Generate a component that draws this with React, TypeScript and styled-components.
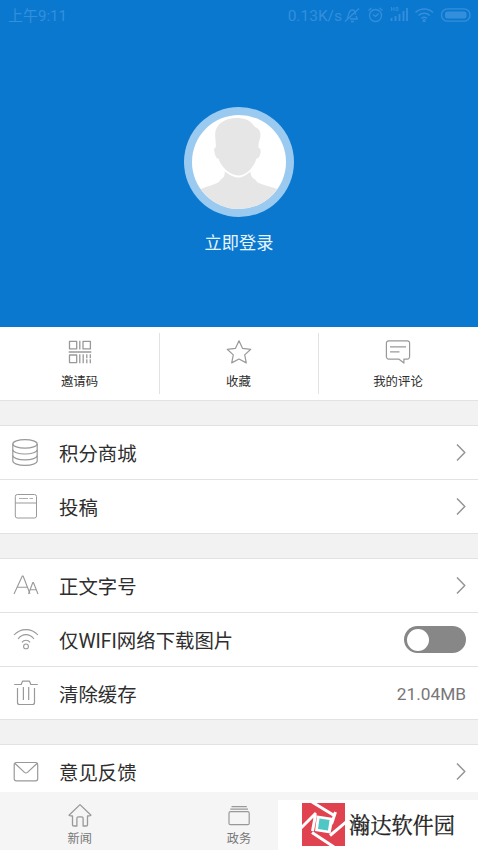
import React, {FC, ReactNode} from "react";
import styled, {createGlobalStyle} from "styled-components";

const colors = {
    blue: "#0b78d0",
    status: "#338fdb",
    white: "#ffffff",
    page: "#f2f2f2",
    line: "#e2e2e2",
    text: "#2e2e2e",
    gray: "#777777",
    icon: "#999999",
    toggle: "#878787",
    tabBar: "#f5f5f5",
    red: "#e0424f",
    teal: "#4fc7c4"
};

const GlobalStyle = createGlobalStyle`
  * {
    box-sizing: border-box;
  }

  body {
    margin: 0;
    font-family: Roboto, "Noto Sans CJK SC", sans-serif;
    color: ${colors.text};
  }
`;

const Screen = styled.div`
  position: relative;
  display: flex;
  flex-direction: column;
  width: 478px;
  height: 850px;
  overflow: hidden;
  background: ${colors.page};
`;

const Header = styled.header`
  flex: none;
  height: 327px;
  display: flex;
  flex-direction: column;
  align-items: center;
  background: ${colors.blue};
`;

const StatusBar = styled.div`
  width: 100%;
  height: 30px;
  padding: 0 7px 0 8px;
  display: flex;
  align-items: center;
  justify-content: space-between;
  color: ${colors.status};
`;

const StatusText = styled.span<{$size: number}>`
  padding-top: 2px;
  font-size: ${props => props.$size}px;
  line-height: 28px;
`;

const StatusIcons = styled.div`
  display: flex;
  align-items: center;
`;

const Avatar = styled.div`
  width: 110px;
  height: 110px;
  margin-top: 77px;
  padding: 8px;
  border-radius: 50%;
  background: #9bcaf0;
`;

const LoginLink = styled.div`
  margin-top: 14px;
  color: #e6f6ff;
  font-size: 17.2px;
  line-height: 24px;
`;

const Actions = styled.div`
  flex: none;
  display: grid;
  grid-template-columns: 159px 159px 160px;
  height: 74px;
  background: ${colors.white};
  border-bottom: 1px solid ${colors.line};
`;

const Action = styled.div`
  height: 61px;
  margin-top: 6px;
  padding: 5px 1px 0 0;
  display: flex;
  flex-direction: column;
  align-items: center;
  border-left: 1px solid ${colors.line};

  &:first-child {
    border-left-color: transparent;
  }
`;

const ActionLabel = styled.div`
  margin-top: 7px;
  font-size: 12.4px;
  line-height: 18px;
`;

const Group = styled.section`
  flex: none;
  margin-top: 24px;
  background: ${colors.white};
  border-top: 1px solid ${colors.line};
  border-bottom: 1px solid ${colors.line};
`;

const RowContainer = styled.div<{$height: number}>`
  box-sizing: content-box;
  display: flex;
  align-items: center;
  height: ${props => props.$height}px;
  padding: 0 12px;
  border-bottom: 1px solid ${colors.line};

  &:last-child {
    border-bottom: none;
  }
`;

const RowLabel = styled.div`
  flex: 1;
  margin-left: 19px;
  padding-top: 5px;
  font-size: 19.4px;
  line-height: 28px;
`;

const RowValue = styled.div`
  padding-top: 2px;
  font-size: 17.3px;
  color: ${colors.gray};
`;

const Toggle = styled.div`
  width: 62px;
  height: 27px;
  padding: 2.5px;
  border-radius: 14px;
  background: ${colors.toggle};
`;

const Knob = styled.div`
  width: 22px;
  height: 22px;
  border-radius: 50%;
  background: ${colors.white};
`;

const TabBar = styled.nav`
  position: absolute;
  left: 0;
  right: 0;
  bottom: 0;
  height: 58px;
  display: flex;
  background: ${colors.tabBar};
`;

const Tab = styled.div`
  width: 33.333%;
  padding-top: 10px;
  display: flex;
  flex-direction: column;
  align-items: center;
  color: ${colors.gray};
  font-size: 12.2px;
  line-height: 20px;
`;

const Watermark = styled.div`
  position: absolute;
  right: 0;
  bottom: 0;
  width: 200px;
  height: 50px;
  padding: 0 0 1px 24px;
  display: flex;
  align-items: center;
  background: ${colors.white};
`;

const WatermarkText = styled.div`
  margin-left: 4px;
  padding-bottom: 2px;
  font-family: "Noto Serif CJK SC", "Noto Sans CJK SC", serif;
  font-size: 21.2px;
  line-height: 30px;
  color: #222222;
  -webkit-text-stroke: 0.3px #222222;
`;

interface IIconProps {
    width?: number;
    height?: number;
    stroke?: string;
    strokeWidth?: number;
    children: ReactNode;
}

const Icon: FC<IIconProps> = ({width = 28, height = 27, stroke = colors.icon, strokeWidth = 1.2, children}) => (
    <svg
        width={width}
        height={height}
        viewBox={`0 0 ${width} ${height}`}
        fill="none"
        stroke={stroke}
        strokeWidth={strokeWidth}
        strokeLinejoin="round"
    >
        {children}
    </svg>
);

const ChevronIcon = () => (
    <Icon width={10} height={18} stroke="#959595" strokeWidth={1.5}>
        <path d="M1 .5l7.8 8L1 16.5" />
    </Icon>
);

const actions = [
    {
        label: "邀请码",
        icon: (
            <Icon height={28} strokeWidth={1.3}>
                <path d="M3.500 3.300h7.200v7.600H3.500zM17 3.300h7.400v7.600H17zM13.800 2.700v8.800M2.700 14h22.600M3.500 17h7.200v7.600H3.500zM13.800 16.300v9M17.200 16.300v9" />
                <path d="M20.800 16.300v9M24.300 16.300v9" strokeDasharray="4 1" />
            </Icon>
        )
    },
    {
        label: "收藏",
        icon: (
            <Icon height={28}>
                <path d="M14 2.7l3.5 7.6 8.3 1-6.1 5.6 1.6 8L14 21l-7.3 3.9 1.6-8-6.1-5.6 8.3-1z" />
            </Icon>
        )
    },
    {
        label: "我的评论",
        icon: (
            <Icon height={28}>
                <path d="M4.7 2.8h18.6a2.3 2.3 0 0 1 2.3 2.3v13.7a2.3 2.3 0 0 1-2.3 2.3h-3.4v4l-5.2-4h-10a2.3 2.3 0 0 1-2.3-2.3V5.1a2.3 2.3 0 0 1 2.3-2.3zM6 8.8h16M6 13.8h9.5" />
            </Icon>
        )
    }
];

interface IRow {
    label: string;
    icon: ReactNode;
    value?: ReactNode;
    height?: number;
}

const groups: IRow[][] = [
    [
        {
            label: "积分商城",
            icon: (
                <Icon>
                    <ellipse cx="13" cy="4.9" rx="12.2" ry="4.3" />
                    <path d="M.8 4.9v17.2c0 2.4 5.4 4.300 12.200 4.300s12.200-1.900 12.200-4.300V4.900" />
                    <path d="M.8 10.800C.8 13.200 6.200 15 13 15s12.200-1.800 12.200-4.200M.8 16.600c0 2.400 5.400 4.200 12.200 4.200s12.200-1.800 12.200-4.200" />
                </Icon>
            )
        },
        {
            label: "投稿",
            icon: (
                <Icon strokeWidth={1}>
                    <rect x="3.3" y="1.5" width="21.2" height="23.5" rx="2" />
                    <path d="M3.3 10h21.2" />
                    <path d="M7 5.5h14" strokeDasharray="9 1.5" strokeWidth={0.8} />
                </Icon>
            )
        }
    ],
    [
        {
            label: "正文字号",
            icon: (
                <Icon strokeWidth={1.1}>
                    <path d="M2 22l8.300-18h.8L18 21.800M5.200 15.300h10" />
                    <path d="M16.500 22l4.300-11.500h.6L26 22M18.300 17.800h6" />
                </Icon>
            )
        },
        {
            label: "仅WIFI网络下载图片",
            icon: (
                <Icon strokeWidth={1.1}>
                    <path d="M2 9c6.500-7.200 17.500-7.200 24 0M6 13c4.500-5.800 11.500-5.800 16 0M9.900 16.300c2.300-2.700 5.900-2.700 8.200 0" />
                    <circle cx="14" cy="20.4" r="2.4" />
                </Icon>
            ),
            value: <Toggle><Knob /></Toggle>
        },
        {
            label: "清除缓存",
            icon: (
                <Icon>
                    <path d="M2.200 4.500h7L10.500 1.200h7l1.300 3.300h7M5.500 8v14.500a2 2 0 0 0 2 2h13a2 2 0 0 0 2-2V8M11.400 7v13M16.700 7v13" />
                </Icon>
            ),
            value: <RowValue>21.04MB</RowValue>,
            height: 52
        }
    ],
    [
        {
            label: "意见反馈",
            icon: (
                <Icon>
                    <rect x="2.2" y="4.5" width="23.5" height="18.3" rx="2" />
                    <path d="M2.800 5.200l9.700 9.200q1.500 1.200 3 0l9.700-9.200" />
                </Icon>
            )
        }
    ]
];

const tabs = [
    {
        label: "新闻",
        icon: (
            <Icon strokeWidth={1.3}>
                <path d="M14 2.600L3 13.200q.2.800 3.500.8v8.700q0 1.300 1.300 1.300h3.100v-7.700q0-1.500 1.500-1.500h3.200q1.500 0 1.500 1.500V24h3.100q1.300 0 1.300-1.300V14q3.300 0 3.500-.8z" />
            </Icon>
        )
    },
    {
        label: "政务",
        icon: (
            <Icon>
                <rect x="4" y="9.7" width="20.2" height="13" rx="1.5" />
                <path d="M6.500 4.600h15.300M5.300 7.100h17.700" />
            </Icon>
        )
    }
];

const StatusGlyphs = () => (
    <Icon width={129} height={20} stroke={colors.status} strokeWidth={1.3}>
        {/* muted bell */}
        <path d="M5 13.500c2-2 1-8 5-8.500 3-.3 3.500 2.500 3.600 4.500M8 14h7.500l-1.500-3M3 16.500L17 3.500M9 16.500h3" />
        {/* alarm clock */}
        <circle cx="33.5" cy="10.5" r="6" />
        <path d="M31 9.500l2.500 2 3-3M26.500 5.500l3-2.500M40.500 5.500l-3-2.500" />
        {/* signal */}
        <path d="M49.500 2v4M49.500 4h2.500M52 2v4M54 2.500v3h2v-3z" strokeWidth={0.8} />
        <path d="M49.500 16v-3M53.500 16v-5M57.500 16V9M61.500 16V6M65 16V3" strokeWidth={1.8} />
        {/* wifi */}
        <path d="M73.500 7.500c5-4.700 12.500-4.700 17.500 0M76.500 10.500c3.300-3 8-3 11.300 0M79.500 13.300c1.700-1.300 3.700-1.300 5.400 0" strokeWidth={1.6} />
        <circle cx="82.2" cy="15.6" r="1" />
        {/* battery */}
        <rect x="99.5" y="3.8" width="28.5" height="12.4" rx="6" />
        <rect x="103" y="6.5" width="21.5" height="7" rx="2.5" fill={colors.status} stroke="none" />
    </Icon>
);

const Row: FC<IRow> = ({label, icon, value, height = 53}) => (
    <RowContainer $height={height}>
        {icon}
        <RowLabel>{label}</RowLabel>
        {value || <ChevronIcon />}
    </RowContainer>
);

const App: FC = () => (
    <>
        <GlobalStyle />
        <Screen>
            <Header>
                <StatusBar>
                    <StatusText $size={15}>上午9:11</StatusText>
                    <StatusIcons>
                        <StatusText $size={15.5}>0.13K/s</StatusText>
                        <StatusGlyphs />
                    </StatusIcons>
                </StatusBar>
                <Avatar>
                    <svg width="94" height="94" viewBox="0 0 94 94">
                        <defs>
                            <clipPath id="face">
                                <circle cx="47" cy="47" r="47" />
                            </clipPath>
                        </defs>
                        <circle cx="47" cy="47" r="47" fill={colors.white} />
                        <g fill="#e6e6e6" clipPath="url(#face)">
                            <path d="M32.700 56.500C33 62 31 63 28.700 64.500C27 70 12 71 6 76v20h84V76C80 71 65 70 63.300 64.500C61 63 58.500 62 58.500 56.500C54 60 51 62.500 46.300 62.500S38 60 32.700 56.500z" />
                            <path d="M45.500 3C35 2.500 24 8 23.200 18c-.3 6 1 10 .6 14.500c-2-.5-2 3-1 6c.7 3 1.500 5 3.700 5C29 52 38 60.500 46.300 60.500S62 52 64.500 43.500c2.500 0 3.500-3 4-5.500c.6-3-.3-5.500-2-5c0-3 0-5 .7-7c1.800-4 2-11-2.200-13C62 12 62 10 59 7.500C55 4 50 3.200 45.500 3z" />
                        </g>
                    </svg>
                </Avatar>
                <LoginLink>立即登录</LoginLink>
            </Header>

            <Actions>
                {actions.map(({label, icon}) => (
                    <Action key={label}>
                        {icon}
                        <ActionLabel>{label}</ActionLabel>
                    </Action>
                ))}
            </Actions>

            {groups.map((rows, index) => (
                <Group key={index}>
                    {rows.map(row => <Row key={row.label} {...row} />)}
                </Group>
            ))}

            <TabBar>
                {tabs.map(({label, icon}) => (
                    <Tab key={label}>
                        {icon}
                        {label}
                    </Tab>
                ))}
            </TabBar>

            <Watermark>
                <svg width="43" height="43" viewBox="0 0 43 43">
                    <rect width="43" height="43" fill={colors.red} />
                    <path
                        d="M10 -1l23 14M33.500 9l-4 12M44 19L28 32.500M32 44L10 29.500M-1 25l15-15M13.500 12l-3 16"
                        stroke={colors.white}
                        strokeWidth="3"
                        fill="none"
                    />
                    <path d="M15 12.500l16.500 2.500-3 15.500-15.500-2.500z" fill={colors.white} />
                    <path d="M17.500 15.500l10 1.500-1.500 10.500-10-1.500z" fill={colors.teal} />
                </svg>
                <WatermarkText>瀚达软件园</WatermarkText>
            </Watermark>
        </Screen>
    </>
);

export default App;
